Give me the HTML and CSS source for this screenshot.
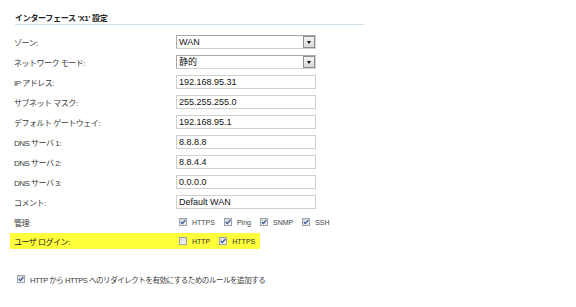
FILE: index.html
```html
<!DOCTYPE html>
<html lang="ja">
<head>
<meta charset="utf-8">
<title>インターフェース設定</title>
<link rel="stylesheet" href="styles.css">
</head>
<body>
<div class="title">インターフェース 'X1' 設定</div>
<div class="form">
  <div class="row"><span class="lbl">ゾーン:</span><div class="select"><span class="val">WAN</span><span class="btn"><i class="arrow"></i></span></div></div>
  <div class="row"><span class="lbl">ネットワーク モード:</span><div class="select"><span class="val">静的</span><span class="btn"><i class="arrow"></i></span></div></div>
  <div class="row"><span class="lbl">IP アドレス:</span><div class="input">192.168.95.31</div></div>
  <div class="row"><span class="lbl">サブネット マスク:</span><div class="input">255.255.255.0</div></div>
  <div class="row"><span class="lbl">デフォルト ゲートウェイ:</span><div class="input">192.168.95.1</div></div>
  <div class="row"><span class="lbl">DNS サーバ 1:</span><div class="input">8.8.8.8</div></div>
  <div class="row"><span class="lbl">DNS サーバ 2:</span><div class="input">8.8.4.4</div></div>
  <div class="row"><span class="lbl">DNS サーバ 3:</span><div class="input">0.0.0.0</div></div>
  <div class="row"><span class="lbl">コメント:</span><div class="input">Default WAN</div></div>
  <div class="row"><span class="lbl">管理:</span>
    <div class="checks">
      <span class="chk"><span class="cb on"><svg viewBox="0 0 6 6"><path d="M0.8 3 L2.4 4.6 L5.3 1.2"/></svg></span>HTTPS</span>
      <span class="chk"><span class="cb on"><svg viewBox="0 0 6 6"><path d="M0.8 3 L2.4 4.6 L5.3 1.2"/></svg></span>Ping</span>
      <span class="chk"><span class="cb on"><svg viewBox="0 0 6 6"><path d="M0.8 3 L2.4 4.6 L5.3 1.2"/></svg></span>SNMP</span>
      <span class="chk"><span class="cb on"><svg viewBox="0 0 6 6"><path d="M0.8 3 L2.4 4.6 L5.3 1.2"/></svg></span>SSH</span>
    </div>
  </div>
  <div class="row hl"><span class="lbl">ユーザ ログイン:</span>
    <div class="checks">
      <span class="chk"><span class="cb"></span>HTTP</span>
      <span class="chk"><span class="cb on"><svg viewBox="0 0 6 6"><path d="M0.8 3 L2.4 4.6 L5.3 1.2"/></svg></span>HTTPS</span>
    </div>
  </div>
</div>
<div class="redirect"><span class="cb on"><svg viewBox="0 0 6 6"><path d="M0.8 3 L2.4 4.6 L5.3 1.2"/></svg></span><span class="rtext">HTTP から HTTPS へのリダイレクトを有効にするためのルールを追加する</span></div>
</body>
</html>
```

FILE: styles.css
```css
body {
  margin: 0;
  background: #ffffff;
  color: #333333;
  font-family: "Liberation Sans", "Noto Sans CJK JP", sans-serif;
}

.title {
  margin-left: 15px;
  width: 349px;
  padding-top: 14px;
  height: 10px;
  line-height: 10px;
  font-size: 8px;
  font-weight: bold;
  letter-spacing: -0.3px;
  color: #222222;
  border-bottom: 1px solid #cfe0ea;
}

.form {
  margin-top: 7px;
}

.row {
  display: flex;
  align-items: center;
  height: 20px;
}

.lbl {
  flex: 0 0 176px;
  box-sizing: border-box;
  padding-left: 14px;
  font-size: 8px;
  letter-spacing: -0.5px;
  color: #3a3a3a;
  white-space: nowrap;
}

.input,
.select {
  width: 140px;
  height: 14px;
  box-sizing: border-box;
  font-size: 9px;
  line-height: 12px;
  color: #111111;
  background: #ffffff;
}

.input {
  border: 1px solid #cfcfcf;
  padding-left: 2px;
}

.select {
  display: flex;
  border: 1px solid #a8a8a8;
  border-right-color: #d0d0d0;
  border-bottom-color: #d0d0d0;
}

.select .val {
  flex: 1;
  padding-left: 2px;
}

.select .btn {
  width: 12px;
  height: 12px;
  box-sizing: border-box;
  border: 1px solid #8e8e8e;
  background: linear-gradient(#f4f4f4, #d9d9d9);
  display: flex;
  align-items: center;
  justify-content: center;
}

.arrow {
  display: block;
  width: 0;
  height: 0;
  border-top: 3px solid #111111;
  border-left: 2px solid transparent;
  border-right: 2px solid transparent;
}

.checks {
  display: flex;
  align-items: center;
  gap: 9px;
  padding-left: 3px;
}

.chk {
  display: flex;
  align-items: center;
  gap: 5px;
  font-size: 7px;
  color: #444444;
}

.cb {
  display: inline-block;
  width: 8px;
  height: 8px;
  box-sizing: border-box;
  border: 1px solid #9aa2ac;
  background: linear-gradient(#d9d9d9, #f3f3f3);
  flex: 0 0 auto;
}

.cb svg {
  display: block;
  width: 6px;
  height: 6px;
}

.cb svg path {
  fill: none;
  stroke: #2f4f9a;
  stroke-width: 1.2;
}

.row.hl {
  margin: 1px 0 0 10px;
  width: 250px;
  height: 16px;
  background: #ffff3c;
}

.row.hl .lbl {
  flex-basis: 166px;
  padding-left: 4px;
  color: #222222;
}

.row.hl .chk {
  color: #333333;
}

.redirect {
  display: flex;
  align-items: center;
  gap: 5px;
  margin-top: 24px;
  height: 12px;
  padding-left: 17px;
}

.rtext {
  font-size: 7.5px;
  letter-spacing: -0.45px;
  color: #3a3a3a;
  white-space: nowrap;
}
```
